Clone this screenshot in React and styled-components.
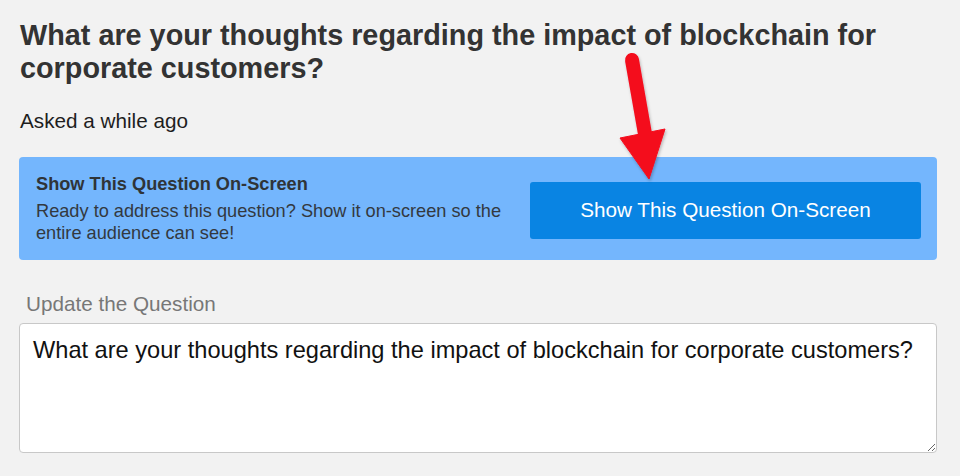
import React from "react";
import styled, { createGlobalStyle } from "styled-components";

const Global = createGlobalStyle`
  html, body { margin: 0; padding: 0; background: #f2f2f2; }
  body { font-family: "Liberation Sans", Arial, sans-serif; }
  * { box-sizing: border-box; }
`;

const Page = styled.div`
  position: relative;
  width: 960px;
  height: 476px;
  padding: 18.5px 23px 0 19px;
  background: #f2f2f2;
  overflow: hidden;
`;

const Title = styled.h1`
  margin: 0 0 0 1px;
  font-size: 28.8px;
  line-height: 33px;
  font-weight: 700;
  color: #333;
`;

const Meta = styled.p`
  margin: 24.5px 0 0 1px;
  font-size: 20.7px;
  line-height: 23.8px;
  color: #1e1e1e;
`;

const Callout = styled.section`
  margin-top: 24px;
  display: flex;
  align-items: flex-start;
  gap: 20px;
  padding: 16.5px 16px 15.5px 17px;
  background: #74b6fd;
  border-radius: 4px;
`;

const CalloutText = styled.div`
  flex: 1;
  min-width: 0;
`;

const CalloutTitle = styled.h2`
  margin: 0;
  font-size: 18.2px;
  line-height: 22px;
  font-weight: 700;
  color: #2f3438;
`;

const CalloutBody = styled.p`
  margin: 5px 0 0;
  font-size: 18.2px;
  line-height: 22px;
  color: #33393f;
`;

const ShowButton = styled.button`
  flex: 0 0 391px;
  height: 57px;
  margin-top: 8.5px;
  border: none;
  border-radius: 3px;
  background: #0984e3;
  color: #fff;
  font-family: "Liberation Sans", Arial, sans-serif;
  font-size: 20.7px;
  cursor: pointer;
`;

const Field = styled.div`
  margin-top: 32.5px;
  display: flex;
  flex-direction: column;
  gap: 6.5px;
`;

const Label = styled.label`
  padding-left: 7px;
  font-size: 20.7px;
  line-height: 23.8px;
  color: #777;
`;

const Input = styled.textarea`
  display: block;
  width: 918px;
  height: 130.5px;
  padding: 13.5px 13px;
  border: 1px solid #c8c8c8;
  border-radius: 4px;
  background: #fff;
  color: #111;
  font-family: "Liberation Sans", Arial, sans-serif;
  font-size: 23.6px;
  line-height: 27px;
  resize: vertical;
  outline: none;
`;

const Arrow = styled.svg`
  position: absolute;
  left: 610px;
  top: 45px;
  width: 70px;
  height: 140px;
  overflow: visible;
  pointer-events: none;
`;

export default function App() {
  return (
    <>
      <Global />
      <Page>
        <Title>
          What are your thoughts regarding the impact of blockchain for
          corporate customers?
        </Title>
        <Meta>Asked a while ago</Meta>
        <Callout>
          <CalloutText>
            <CalloutTitle>Show This Question On-Screen</CalloutTitle>
            <CalloutBody>
              Ready to address this question? Show it on-screen so the entire
              audience can see!
            </CalloutBody>
          </CalloutText>
          <ShowButton>Show This Question On-Screen</ShowButton>
        </Callout>
        <Field>
          <Label>Update the Question</Label>
          <Input defaultValue="What are your thoughts regarding the impact of blockchain for corporate customers?" />
        </Field>
        <Arrow viewBox="610 45 70 140">
          <defs>
            <filter id="sh" x="-50%" y="-20%" width="200%" height="150%">
              <feDropShadow dx="1" dy="2" stdDeviation="1.5" floodColor="#000" floodOpacity="0.25" />
            </filter>
          </defs>
          <g filter="url(#sh)" fill="#f40a1e" stroke="#f40a1e">
            <line x1="632" y1="60" x2="645" y2="134" strokeWidth="14" strokeLinecap="round" />
            <polygon points="620,138 665,129 649,179" strokeWidth="1" strokeLinejoin="round" />
          </g>
        </Arrow>
      </Page>
    </>
  );
}
